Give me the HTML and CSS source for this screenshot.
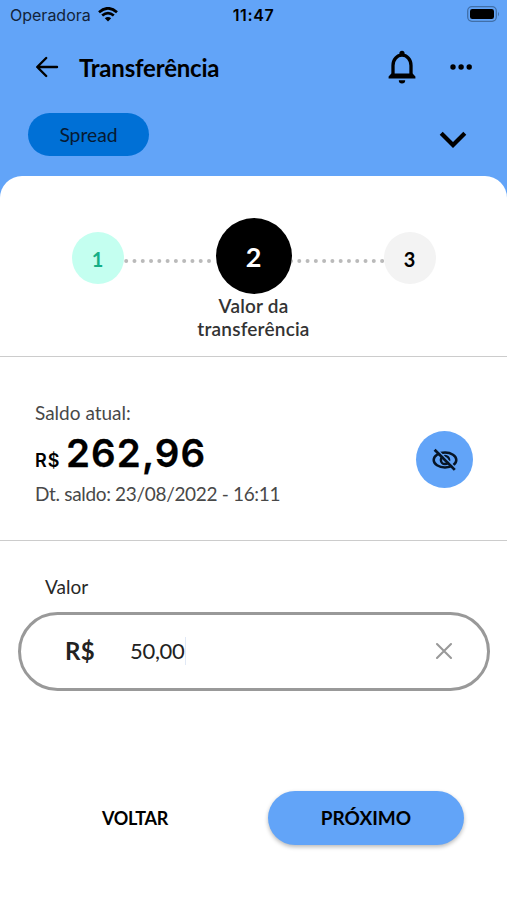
FILE: index.html
```html
<!DOCTYPE html>
<html lang="pt-BR">
<head>
<meta charset="utf-8">
<meta name="viewport" content="width=device-width, initial-scale=1">
<title>Transferência</title>
<link rel="stylesheet" href="styles.css">
</head>
<body>
<div class="screen">
  <header class="header">
    <div class="status">
      <div class="carrier"><span class="carrier-name">Operadora</span>
        <svg class="wifi" width="20" height="15" viewBox="0 0 20 15" fill="none" stroke="#000" stroke-width="2.7"><path d="M1 5.2Q10-2.6 19 5.2M4.2 8.6Q10 3.6 15.8 8.6"/><path d="M6.8 11.3Q10 8.6 13.2 11.3L10 14.5Z" fill="#000" stroke="none"/></svg>
      </div>
      <span class="time">11:47</span>
      <svg class="battery" width="33" height="16" viewBox="0 0 33 16"><rect x=".7" y=".7" width="28.6" height="14.6" rx="4.2" fill="none" stroke="#416fa8" stroke-width="1.3"/><rect x="3" y="3" width="24" height="10" rx="2.3"/><path d="M31 5.7q2 2.3 0 4.6z" fill="#416fa8"/></svg>
    </div>
    <div class="titlebar">
      <svg class="back" width="24" height="22" viewBox="0 0 24 22" fill="none" stroke="#000" stroke-width="2.4" stroke-linecap="round" stroke-linejoin="round"><path d="M22 11H2.5M11.2 2L2.2 11l9 9"/></svg>
      <h1>Transferência</h1>
      <svg class="bell" width="28" height="34" viewBox="0 0 28 34"><path d="M5 26V15.5C5 9.5 9 5.2 14 5.2S23 9.5 23 15.5V26" fill="none" stroke="#000" stroke-width="3.3"/><path d="M11.4 5V3.4a2.6 2.6 0 0 1 5.2 0V5zM3.4 23.6h21.2l2.8 3v1.9H.6v-1.9zM10.8 30.2h6.4a3.2 3.2 0 0 1-6.4 0z"/></svg>
      <svg class="more" width="23" height="6" viewBox="0 0 23 6"><circle cx="3" cy="3" r="2.7"/><circle cx="11.1" cy="3" r="2.7"/><circle cx="19.2" cy="3" r="2.7"/></svg>
    </div>
    <div class="account">
      <span class="chip">Spread</span>
      <svg class="chevron" width="28" height="18" viewBox="0 0 28 18" fill="none" stroke="#000" stroke-width="4.2"><path d="M2.2 2.2L14 14 25.8 2.2"/></svg>
    </div>
  </header>
  <main class="sheet">
    <section class="progress">
      <div class="steps">
        <span class="step done">1</span>
        <svg class="dots" width="92" height="6" viewBox="0 0 92 6"><path d="M2.2 3H92" stroke="#bababa" stroke-width="4" stroke-linecap="round" stroke-dasharray="0 8.28"/></svg>
        <span class="step current">2</span>
        <svg class="dots" width="92" height="6" viewBox="0 0 92 6"><path d="M-1 3H92" stroke="#bababa" stroke-width="4" stroke-linecap="round" stroke-dasharray="0 8.28"/></svg>
        <span class="step">3</span>
      </div>
      <p class="step-label">Valor da<br>transferência</p>
    </section>
    <section class="balance">
      <div>
        <p class="muted">Saldo atual:</p>
        <p class="amount"><span class="currency">R$</span><span class="value">262,96</span></p>
        <p class="muted date">Dt. saldo: 23/08/2022 - 16:11</p>
      </div>
      <div class="toggle">
        <svg width="28" height="24" viewBox="0 0 28 24" fill="none" stroke="#071526" stroke-width="2.5"><ellipse cx="14" cy="12" rx="11.3" ry="7.4"/><circle cx="14" cy="12" r="4.1"/><path d="M5.8 1.2L25.4 20.8" stroke="#62a4f8" stroke-width="1.6"/><path d="M3.6 1.7L23.8 21.9" stroke-width="2.7"/></svg>
      </div>
    </section>
    <section class="form">
      <span class="field-label">Valor</span>
      <div class="field">
        <span class="prefix">R$</span>
        <span class="entry">50,00</span>
        <svg class="clear" width="18" height="18" viewBox="0 0 18 18" stroke="#999" stroke-width="2.1" stroke-linecap="round"><path d="M2 2l14 14M16 2L2 16"/></svg>
      </div>
      <div class="actions">
        <span class="button plain">VOLTAR</span>
        <span class="button primary">PRÓXIMO</span>
      </div>
    </section>
  </main>
</div>
</body>
</html>
```
FILE: styles.css
```css
* { box-sizing: border-box; }
body { margin: 0; font-family: Lato, "Liberation Sans", sans-serif; color: #000; background: #62a4f8; }
h1, p { margin: 0; }
svg { display: block; flex: none; }
.screen { width: 507px; height: 900px; display: flex; flex-direction: column; overflow: hidden; }
.header { height: 176px; flex: none; }
.status { height: 30px; display: grid; grid-template-columns: 1fr auto 1fr; align-items: center; padding: 0 7px 0 10px; font-family: Inter, sans-serif; }
.carrier { display: flex; align-items: center; gap: 7px; margin-top: -1px; }
.carrier-name { font-size: 16px; line-height: 20px; color: #12233a; }
.time { font-size: 16px; font-weight: 600; letter-spacing: .6px; margin-left: -3px; }
.battery { justify-self: end; margin-top: -2px; }
.titlebar { height: 74px; display: flex; align-items: center; padding: 0 34px 0 35px; }
.titlebar h1 { font-size: 24px; line-height: 30px; font-weight: 700; letter-spacing: -.2px; margin: 2px auto 0 20px; }
.more { margin-left: 34px; }
.account { display: flex; justify-content: space-between; padding: 9px 40px 0 28px; }
.chip { width: 121px; height: 43px; border-radius: 22px; background: #0070d6; color: #061a33; font-size: 19.3px; display: flex; align-items: center; justify-content: center; }
.chevron { margin-top: 18px; }
.sheet { flex: 1; background: #fff; border-radius: 22px 22px 0 0; }
.progress { height: 181px; padding-top: 42px; border-bottom: 1px solid #ccc; }
.steps { display: flex; align-items: center; justify-content: center; height: 75px; }
.step { width: 52px; height: 52px; margin-top: 5px; border-radius: 50%; background: #f3f3f3; font-size: 20px; font-weight: 700; display: flex; align-items: center; justify-content: center; flex: none; padding-top: 1px; }
.done { background: #c4fff0; color: #15af86; }
.current { width: 76px; height: 76px; margin-top: 0; background: #000; color: #fff; font-size: 27px; }
.dots { margin-top: 10px; }
.step-label { padding-top: 1px; font-size: 19px; line-height: 23px; font-weight: 600; letter-spacing: .2px; text-align: center; color: #333; }
.balance { height: 184px; display: flex; justify-content: space-between; align-items: flex-start; padding: 44px 34px 0 35px; border-bottom: 1px solid #ccc; }
.muted { font-size: 19px; line-height: 24px; color: #484848; }
.date { letter-spacing: -.33px; }
.amount { display: flex; align-items: baseline; font-family: Inter, sans-serif; height: 57px; line-height: 57px; }
.currency { font-size: 18px; font-weight: 600; letter-spacing: 1px; width: 31px; }
.value { font-size: 38.5px; font-weight: 600; letter-spacing: 1.1px; -webkit-text-stroke: .3px #000; }
.toggle { width: 57px; height: 57px; border-radius: 50%; background: #62a4f8; display: flex; align-items: center; justify-content: center; margin-top: 30px; }
.form { padding: 33px 17px 0 18px; }
.field-label { display: block; padding-left: 27px; font-size: 19px; line-height: 25px; color: #282828; }
.field { height: 79px; margin-top: 13px; border: 3px solid #999; border-radius: 40px; display: flex; align-items: center; padding: 0 34px 2px 44px; color: #222; }
.prefix { width: 65px; font-size: 24px; font-weight: 700; letter-spacing: .3px; }
.entry { font-size: 22px; letter-spacing: -.3px; border-right: 1px solid #e1e9f6; line-height: 28px; }
.clear { margin-left: auto; }
.actions { display: flex; justify-content: space-between; padding: 100px 26px 0 19px; }
.button { width: 196px; height: 54px; border-radius: 27px; font-size: 19px; font-weight: 700; display: flex; align-items: center; justify-content: center; padding-bottom: 1px; }
.plain { font-size: 18px; letter-spacing: -.3px; }
.primary { background: #62a4f8; box-shadow: 0 2px 4px rgba(0,0,0,.28); }
```
